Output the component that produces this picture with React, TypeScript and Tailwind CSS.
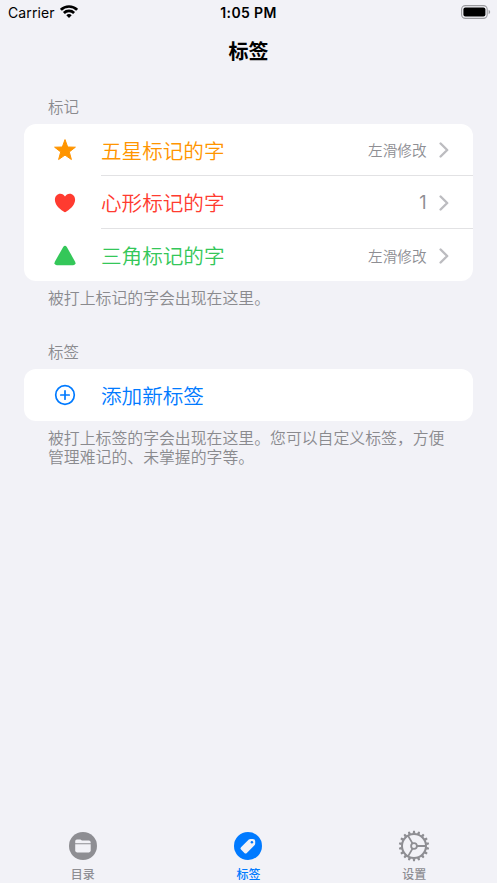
import type { ReactNode } from 'react';

type MarkRow = {
  title: string;
  detail: string;
  color: string;
  detailClass: string;
  icon: ReactNode;
};

const marks: MarkRow[] = [
  {
    title: '五星标记的字',
    detail: '左滑修改',
    color: 'text-[#ff9500]',
    detailClass: 'text-[14.6px]',
    icon: (
      <svg viewBox="0 0 24 24" className="h-6 w-6" fill="currentColor" stroke="currentColor" strokeWidth="1" strokeLinejoin="round">
        <path d="M12 1.6L14.7 9L22.4 9.2L16.3 13.9L18.4 21.5L12 17.1L5.6 21.5L7.7 13.9L1.6 9.2L9.3 9Z" />
      </svg>
    ),
  },
  {
    title: '心形标记的字',
    detail: '1',
    color: 'text-[#ff3b30]',
    detailClass: "font-['Inter',sans-serif] text-[18px] font-normal",
    icon: (
      <svg viewBox="0 0 24 24" className="mt-px h-6 w-6" fill="currentColor">
        <path d="M12 21.3C11.6 21.3 11.1 20.9 10.6 20.6C5.2 17.1 1.9 13 1.9 8.8C1.9 5.3 4.3 2.8 7.4 2.8C9.4 2.8 11 3.9 12 5.6C13 3.9 14.6 2.8 16.6 2.8C19.7 2.8 22.1 5.3 22.1 8.8C22.1 13 18.8 17.1 13.4 20.6C12.9 20.9 12.4 21.3 12 21.3Z" />
      </svg>
    ),
  },
  {
    title: '三角标记的字',
    detail: '左滑修改',
    color: 'text-[#34c759]',
    detailClass: 'text-[14.6px]',
    icon: (
      <svg viewBox="0 0 24 24" className="mt-[2px] h-6 w-6" fill="currentColor">
        <path d="M10.2 3Q12 0.7 13.8 3L22 17.4Q23.6 21 20.2 21.2H3.8Q0.4 21 2 17.4Z" />
      </svg>
    ),
  },
];

const teeth = Array.from({ length: 18 }, (_, i) => i * 20);

function StatusBar() {
  return (
    <div className="flex h-[26px] items-center justify-between pr-[6px] pl-[8px] font-['Inter',sans-serif] text-[14px] font-normal text-black">
      <div className="flex w-[120px] items-center gap-[5px]">
        <span className="mb-[2px] tracking-[0.1px]">Carrier</span>
        <svg viewBox="0 0 18 13" className="mb-[3px] h-[13px] w-[18px]" fill="none" stroke="#000" strokeWidth="2.7">
          <path d="M0.9 4.8C5.3 0.4 12.7 0.4 17.1 4.8" />
          <path d="M3.9 8C6.7 5.2 11.3 5.2 14.1 8" />
          <path d="M9 13L6.3 10.3Q9 7.9 11.7 10.3Z" fill="#000" stroke="none" />
        </svg>
      </div>
      <span className="mr-[2px] mb-[2px] font-semibold tracking-[0.35px]">1:05 PM</span>
      <div className="flex w-[120px] justify-end">
        <svg viewBox="0 0 30 14" className="mb-[2px] h-[14px] w-[30px]">
          <rect x="0.6" y="0.6" width="25.6" height="12.8" rx="3.8" fill="none" stroke="#9a9a9e" strokeWidth="1.1" />
          <rect x="2.4" y="2.4" width="22" height="9.2" rx="2" fill="#000" />
          <path d="M27.6 4.7Q29.2 5.5 29.2 7Q29.2 8.5 27.6 9.3Z" fill="#9a9a9e" />
        </svg>
      </div>
    </div>
  );
}

function Chevron() {
  return (
    <svg viewBox="0 0 10 16" className="ml-[12px] h-4 w-[10px]" fill="none" stroke="#bcbcc0" strokeWidth="2.4" strokeLinecap="round" strokeLinejoin="round">
      <path d="M1.6 1.5L8.2 8L1.6 14.5" />
    </svg>
  );
}

function FolderIcon() {
  return (
    <svg viewBox="0 0 30 30" className="h-[30px] w-[30px]">
      <circle cx="15" cy="15" r="14" fill="#8e8e93" />
      <path d="M7.2 12.2V10.3Q7.2 8.6 8.9 8.6H12.2Q12.9 8.6 13.5 9.2L14 9.6H20.9Q22.7 9.6 22.7 11.4V12.2Z" fill="#f2f2f7" />
      <path d="M7.2 13.2H22.7V19.6Q22.7 21.4 20.9 21.4H9Q7.2 21.4 7.2 19.6Z" fill="#f2f2f7" />
    </svg>
  );
}

function TagIcon() {
  return (
    <svg viewBox="0 0 30 30" className="h-[30px] w-[30px]">
      <circle cx="15" cy="15" r="14" fill="#007aff" />
      <path d="M8 16.2L15.8 8.6Q16.5 7.9 17.5 7.9H19.8Q22.2 7.9 22.2 10.3V12.5Q22.2 13.5 21.5 14.2L13.8 22Q12.6 23.1 11.4 22L8 18.6Q6.8 17.4 8 16.2Z" fill="#f2f2f7" />
      <circle cx="18.9" cy="11.3" r="1.25" fill="#007aff" />
    </svg>
  );
}

function GearIcon() {
  return (
    <svg viewBox="0 0 32 32" className="h-8 w-8" fill="none" stroke="#8e8e93" strokeWidth="2">
      <circle cx="16" cy="16" r="12" />
      <circle cx="16" cy="16" r="2.9" strokeWidth="1.8" />
      <path d="M19 16H28M14.5 13.4L10 5.6M14.5 18.6L10 26.4" strokeWidth="1.8" />
      {teeth.map((angle) => (
        <path key={angle} d="M14.6 3.6L15.1 0.8H16.9L17.4 3.6Z" fill="#8e8e93" stroke="none" transform={`rotate(${angle} 16 16)`} />
      ))}
    </svg>
  );
}

const tabs = [
  { label: '目录', icon: <FolderIcon />, active: false },
  { label: '标签', icon: <TagIcon />, active: true },
  { label: '设置', icon: <GearIcon />, active: false },
];

export default function App() {
  return (
    <div className="flex h-[883px] w-[497px] flex-col overflow-hidden bg-[#f2f2f7] font-['Noto_Sans_CJK_SC',sans-serif] font-[350]">
      <StatusBar />
      <h1 className="h-[50px] text-center text-[20px] leading-[49px] font-bold text-black">标签</h1>

      <main className="flex-1 px-6">
        <h2 className="pt-[20px] pl-6 text-[15.4px] leading-[20px] text-[#8a8a8e]">标记</h2>
        <ul className="mt-[7.5px] h-[157.5px] w-[448.5px] rounded-xl bg-white">
          {marks.map((mark, i) => (
            <li key={mark.title} className={`flex h-[52.5px] pl-[29px] ${mark.color}`}>
              <div className="flex w-[48px] items-center">{mark.icon}</div>
              <div className={`flex flex-1 items-center pt-[2px] pr-[24px] ${i < marks.length - 1 ? 'border-b border-[#e2e2e4]' : ''}`}>
                <span className="flex-1 text-[20.6px]">{mark.title}</span>
                <span className={`text-[#8e8e93] ${mark.detailClass}`}>{mark.detail}</span>
                <Chevron />
              </div>
            </li>
          ))}
        </ul>
        <p className="mt-[7px] pl-6 text-[15.86px] leading-[19px] text-[#8a8a8e]">被打上标记的字会出现在这里。</p>

        <h2 className="mt-[34px] pl-6 text-[15.4px] leading-[20px] text-[#8a8a8e]">标签</h2>
        <button className="mt-[7.5px] flex h-[52px] w-[448.5px] items-center rounded-xl bg-white pl-[29px] text-[#007aff]">
          <svg viewBox="0 0 24 24" className="mr-[24px] h-6 w-6" fill="none" stroke="currentColor" strokeWidth="1.7" strokeLinecap="round">
            <circle cx="12" cy="12" r="9.3" />
            <path d="M12 7.8V16.2M7.8 12H16.2" />
          </svg>
          <span className="pt-px text-[20.6px]">添加新标签</span>
        </button>
        <p className="mt-[7.5px] pl-6 text-[15.86px] leading-[19px] whitespace-nowrap text-[#8a8a8e]">
          被打上标签的字会出现在这里。您可以自定义标签，方便
          <br />
          管理难记的、未掌握的字等。
        </p>
      </main>

      <nav className="grid h-[53px] grid-cols-3">
        {tabs.map((tab) => (
          <button
            key={tab.label}
            className={`flex flex-col items-center text-[12px] leading-[16px] font-medium ${tab.active ? 'text-[#007aff]' : 'text-[#8e8e93]'}`}
          >
            <span className="mb-[4px] flex h-8 items-center">{tab.icon}</span>
            {tab.label}
          </button>
        ))}
      </nav>
    </div>
  );
}
